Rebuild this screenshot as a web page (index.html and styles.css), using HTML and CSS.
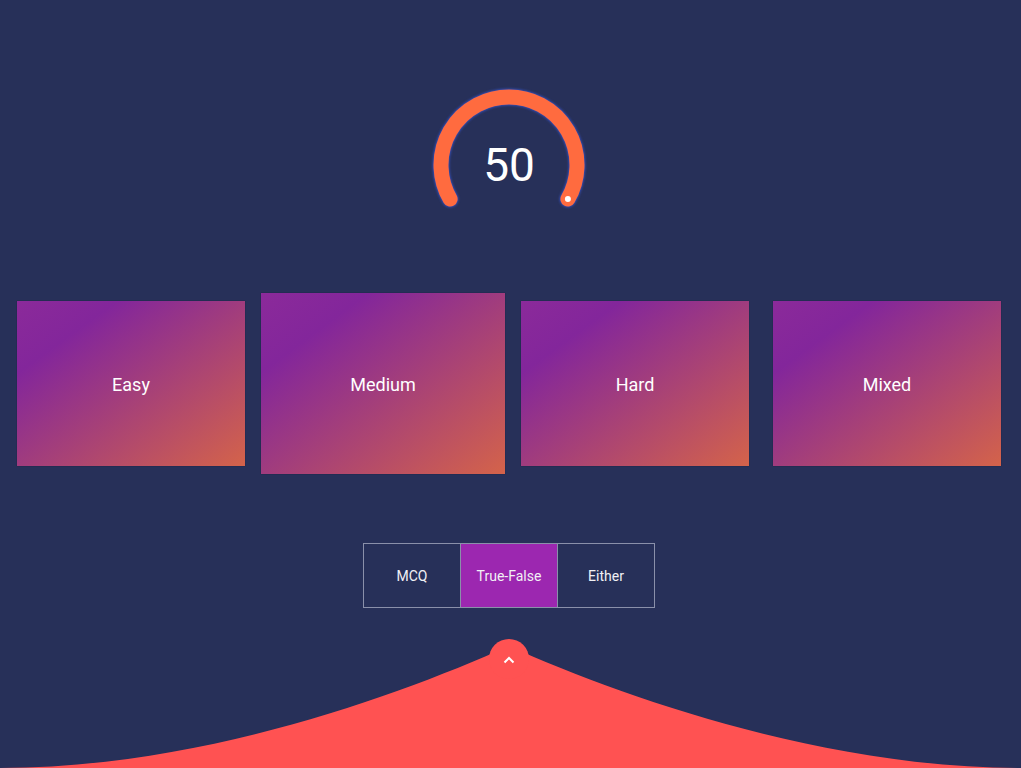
FILE: index.html
```html
<!DOCTYPE html>
<html lang="en">
<head>
    <meta charset="UTF-8">
    <meta name="viewport" content="width=device-width, initial-scale=1.0">
    <title>Quiz Setup</title>
    <link rel="stylesheet" href="styles.css">
</head>
<body>
    <main class="page">
        <div class="gauge">
            <svg class="gauge-arc" width="180" height="150" viewBox="0 0 180 150">
                <path d="M31.11 114 A68 68 0 1 1 148.89 114" fill="none" stroke="#ff6b3f" stroke-width="15" stroke-linecap="round"/>
                <circle cx="148.89" cy="114" r="3" fill="#fff"/>
            </svg>
            <span class="gauge-value">50</span>
        </div>

        <div class="levels">
            <div class="card">Easy</div>
            <div class="card active">Medium</div>
            <div class="card">Hard</div>
            <div class="card">Mixed</div>
        </div>

        <div class="types">
            <button class="type">MCQ</button>
            <button class="type active">True-False</button>
            <button class="type">Either</button>
        </div>

        <footer class="footer">
            <svg width="1021" height="130" viewBox="0 0 1021 130">
                <path d="M0 130 C200 130 400 57 509 8 C618 57 821 130 1021 130 Z" fill="#ff5252"/>
                <circle cx="509" cy="21" r="20" fill="#ff5252"/>
                <path d="M504.5 24.5 L509 20 L513.5 24.5" fill="none" stroke="#fff" stroke-width="2"/>
            </svg>
        </footer>
    </main>
</body>
</html>
```

FILE: styles.css
```css
body {
    margin: 0;
    padding: 0;
    background-color: #273059;
    color: #fff;
    font-family: Roboto, "Liberation Sans", sans-serif;
    overflow: hidden;
}

.page {
    height: 100vh;
    display: flex;
    flex-direction: column;
    align-items: center;
    padding-right: 3px;
}

.gauge {
    position: relative;
    width: 180px;
    height: 150px;
    margin-top: 85px;
}

.gauge-arc {
    display: block;
    filter: drop-shadow(0 0 1.5px #3d64ff);
}

.gauge-value {
    position: absolute;
    left: 0;
    right: 0;
    top: 55px;
    text-align: center;
    font-size: 46px;
    line-height: 50px;
}

.levels {
    align-self: stretch;
    display: flex;
    align-items: center;
    gap: 24px;
    padding-left: 17px;
    margin-top: 66px;
    height: 165px;
}

.card {
    width: 228px;
    height: 165px;
    display: flex;
    align-items: center;
    justify-content: center;
    padding-top: 2px;
    box-sizing: border-box;
    font-size: 18px;
    background: linear-gradient(to bottom right, #8b2a9a 0%, #83269b 22%, #d4634a 100%);
    box-shadow: 0 0 1px rgba(0, 0, 0, 0.4);
}

.card.active {
    width: 244px;
    height: 181px;
    margin: 0 -8px;
}

.types {
    display: flex;
    margin-top: 77px;
    border: 1px solid #8a90aa;
}

.type {
    box-sizing: border-box;
    width: 97px;
    height: 63px;
    background: none;
    border: 0;
    border-left: 1px solid #8a90aa;
    color: #f1f1f5;
    font-family: Roboto, "Liberation Sans", sans-serif;
    font-size: 14px;
    padding: 0;
}

.type:first-child {
    width: 96px;
    border-left: 0;
}

.type.active {
    background: #9c27b0;
}

.footer {
    align-self: flex-start;
    margin-top: auto;
    line-height: 0;
}
```
